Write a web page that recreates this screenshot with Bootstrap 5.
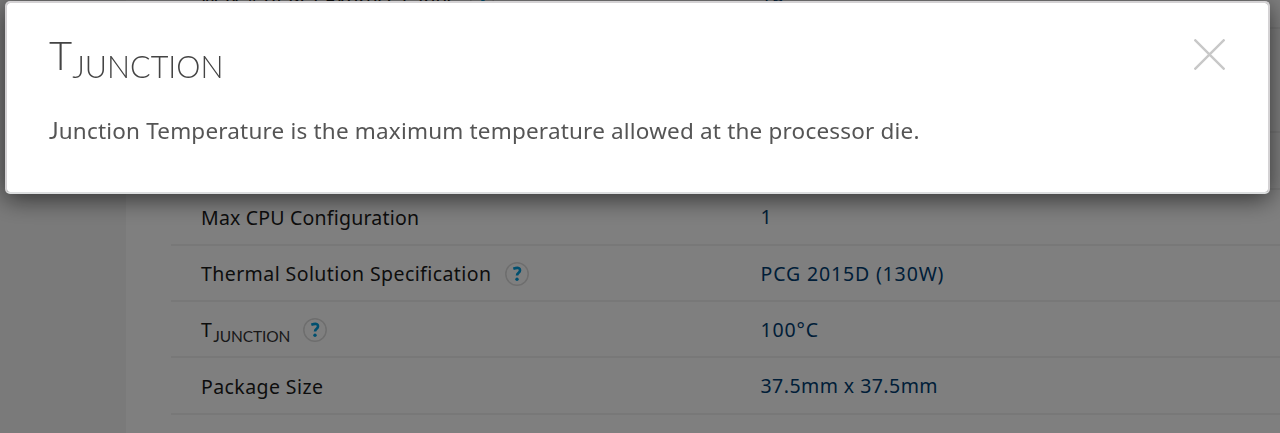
<!DOCTYPE html>
<html lang="en">
<head>
<meta charset="utf-8">
<meta name="viewport" content="width=device-width, initial-scale=1">
<title>Processor specifications</title>
<link href="https://cdn.jsdelivr.net/npm/bootstrap@5.3.0/dist/css/bootstrap.min.css" rel="stylesheet">
<style>
  body { font-family: "Noto Sans", "Open Sans", sans-serif; font-size: 19.5px; line-height: 28px; color: #1a1a1a; background: #f4f4f4; height: 433px; }
  .spec-panel { margin-left: 126px; padding-left: 45px; height: 433px; }
  .spec-list { margin-top: -27px; }
  .spec-item { height: 56.3px; border-bottom: 2px solid #f0f0f0; padding-left: 30px; }
  .spec-tall { height: 104px; }
  .spec-label { width: 559.5px; letter-spacing: .42px; padding-top: 2px; }
  .spec-label.snug { letter-spacing: .2px; }
  .spec-value { color: #003c71; letter-spacing: .85px; padding-top: 1px; }
  .spec-value.snug { letter-spacing: .45px; }
  .help-dot { width: 24px; height: 24px; margin: -1px 0 0 13.5px; flex: none; }
  .sub-text { font-family: Lato, "Noto Sans", sans-serif; font-size: 15.5px; letter-spacing: -.1px; position: relative; top: 5px; left: 1px; color: #333; }
  .modal-backdrop { --bs-backdrop-opacity: .5; }
  .tip-dialog { width: 1265px; max-width: none; margin: 1px 0 0 5px; }
  .tip-content { height: 193px; border: 2px solid #d4d2d4; border-bottom-color: #dcdedf; border-radius: 5px; padding: 0 43px 0 42px; color: #555; box-shadow: 0 5px 24px rgba(0,0,0,.6); }
  .tip-title { font-family: Lato, "Open Sans", sans-serif; font-weight: 300; font-size: 40px; line-height: 56px; margin-top: 24px; color: #444; }
  .tip-title span { font-size: 30.5px; position: relative; top: 8px; }
  .tip-text { font-size: 22.5px; line-height: 32px; margin: 29px 0 0; white-space: nowrap; letter-spacing: .19px; }
  .tip-text::first-letter { font-family: Lato, "Noto Sans", sans-serif; }
  .tip-close { width: 31px; height: 31px; margin-top: 36px; }
</style>
<script src="https://cdn.jsdelivr.net/npm/bootstrap@5.3.0/dist/js/bootstrap.bundle.min.js"></script>
</head>
<body class="overflow-hidden">
<svg class="d-none"><symbol id="help" viewBox="0 0 24 24"><circle cx="12" cy="12" r="11.2" fill="none" stroke="#dcdcdc" stroke-width="1.5"/><path d="M8.3 6.8Q15 4.4 15 8.4C15 10.8 12 10.7 12 13.6" fill="none" stroke="#009fdf" stroke-width="2.6"/><circle cx="12" cy="17.3" r="1.7" fill="#009fdf"/></symbol></svg>
<main class="spec-panel bg-white overflow-hidden">
  <div class="spec-list">
    <div class="spec-item d-flex align-items-center"><div class="spec-label snug d-flex align-items-center"><span>Max # of PCI Express Lanes</span><svg class="help-dot"><use href="#help"/></svg></div><div class="spec-value">16</div></div>
    <div class="spec-item spec-tall"></div>
    <div class="spec-item"></div>
    <div class="spec-item d-flex align-items-center"><div class="spec-label snug"><span>Max CPU Configuration</span></div><div class="spec-value">1</div></div>
    <div class="spec-item d-flex align-items-center"><div class="spec-label d-flex align-items-center"><span>Thermal Solution Specification</span><svg class="help-dot"><use href="#help"/></svg></div><div class="spec-value">PCG 2015D (130W)</div></div>
    <div class="spec-item d-flex align-items-center"><div class="spec-label d-flex align-items-center"><span>T<span class="sub-text">JUNCTION</span></span><svg class="help-dot"><use href="#help"/></svg></div><div class="spec-value">100°C</div></div>
    <div class="spec-item d-flex align-items-center"><div class="spec-label"><span>Package Size</span></div><div class="spec-value snug">37.5mm x 37.5mm</div></div>
  </div>
</main>
<div class="modal-backdrop show"></div>
<div class="modal d-block overflow-hidden" tabindex="-1" role="dialog">
  <div class="modal-dialog tip-dialog">
    <div class="modal-content tip-content">
      <div class="d-flex justify-content-between align-items-start">
        <h1 class="tip-title mb-0">T<span>JUNCTION</span></h1>
        <button class="btn p-0 border-0 tip-close" aria-label="Close"><svg class="d-block" width="31" height="31" viewBox="0 0 31 31"><path d="M.5.5l30 30M30.5.5l-30 30" stroke="#c8c8c8" stroke-width="2.4"/></svg></button>
      </div>
      <p class="tip-text">Junction Temperature is the maximum temperature allowed at the processor die.</p>
    </div>
  </div>
</div>
</body>
</html>
